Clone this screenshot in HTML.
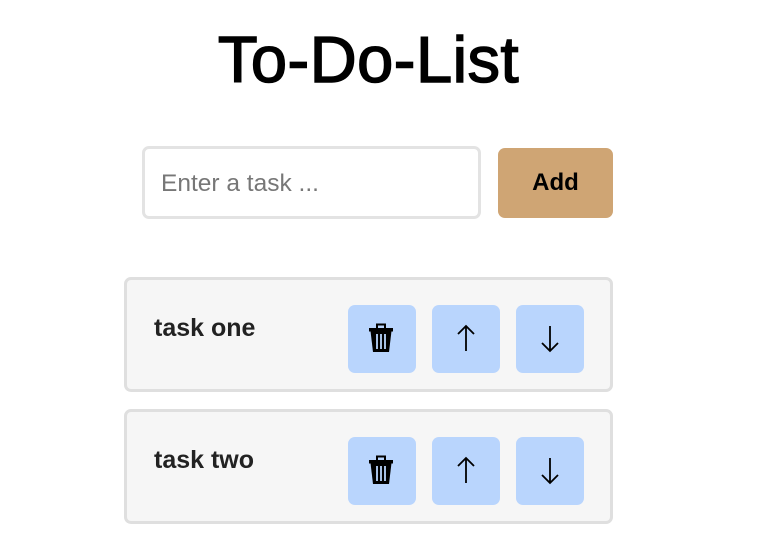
<!DOCTYPE html>
<html><head><style>
body{margin:0;width:763px;height:544px;background:#fff;position:relative;font-family:"Liberation Sans",sans-serif;overflow:hidden}
h1{position:absolute;left:0;width:737px;text-align:center;top:20px;margin:0;font-size:65px;font-weight:normal;line-height:80px;-webkit-text-stroke:1.5px #000;color:#000;letter-spacing:0.5px}
.inp{position:absolute;left:142px;top:146px;width:333px;height:67px;border:3px solid #e3e3e3;border-radius:7px;box-sizing:content-box}
.inp span{position:absolute;left:16px;top:21px;font-size:24.5px;color:#777}
.add{position:absolute;left:498px;top:148px;width:115px;height:70px;background:#cfa574;border-radius:7px;font-weight:bold;font-size:24px;text-align:center;line-height:70px;color:#000}
.card{position:absolute;left:124px;width:483px;height:109px;border:3px solid #dfdfdf;background:#f6f6f6;border-radius:7px}
.card .t{position:absolute;left:27px;top:34px;font-size:25px;font-weight:bold;color:#222}
.b{position:absolute;top:25px;width:68px;height:68px;background:#b9d5fd;border-radius:7px}
.b svg{position:absolute;left:0;top:0}
</style></head><body>
<h1>To-Do-List</h1>
<div class="inp"><span>Enter a task ...</span></div>
<div class="add">Add</div>

<div class="card" style="top:277px">
<div class="t">task one</div>
<div class="b" style="left:221px"><svg width="68" height="68"><path d="M29 23v-3.5h8v3.5" fill="none" stroke="#000" stroke-width="2"/><rect x="21" y="23" width="24" height="3.5" fill="#000"/><path d="M22.5 26h21l-2.5 21h-16z" fill="#000"/><path d="M29 29v15M33 29v15M37 29v15" stroke="#b9d5fd" stroke-width="1.8"/></svg></div>
<div class="b" style="left:305px"><svg width="68" height="68"><path d="M34 21v25M26 29l8-8 8 8" fill="none" stroke="#000" stroke-width="1.8"/></svg></div>
<div class="b" style="left:389px"><svg width="68" height="68"><path d="M34 21v25M26 38l8 8 8-8" fill="none" stroke="#000" stroke-width="1.8"/></svg></div>
</div>

<div class="card" style="top:409px">
<div class="t">task two</div>
<div class="b" style="left:221px"><svg width="68" height="68"><path d="M29 23v-3.5h8v3.5" fill="none" stroke="#000" stroke-width="2"/><rect x="21" y="23" width="24" height="3.5" fill="#000"/><path d="M22.5 26h21l-2.5 21h-16z" fill="#000"/><path d="M29 29v15M33 29v15M37 29v15" stroke="#b9d5fd" stroke-width="1.8"/></svg></div>
<div class="b" style="left:305px"><svg width="68" height="68"><path d="M34 21v25M26 29l8-8 8 8" fill="none" stroke="#000" stroke-width="1.8"/></svg></div>
<div class="b" style="left:389px"><svg width="68" height="68"><path d="M34 21v25M26 38l8 8 8-8" fill="none" stroke="#000" stroke-width="1.8"/></svg></div>
</div>
</body></html>
